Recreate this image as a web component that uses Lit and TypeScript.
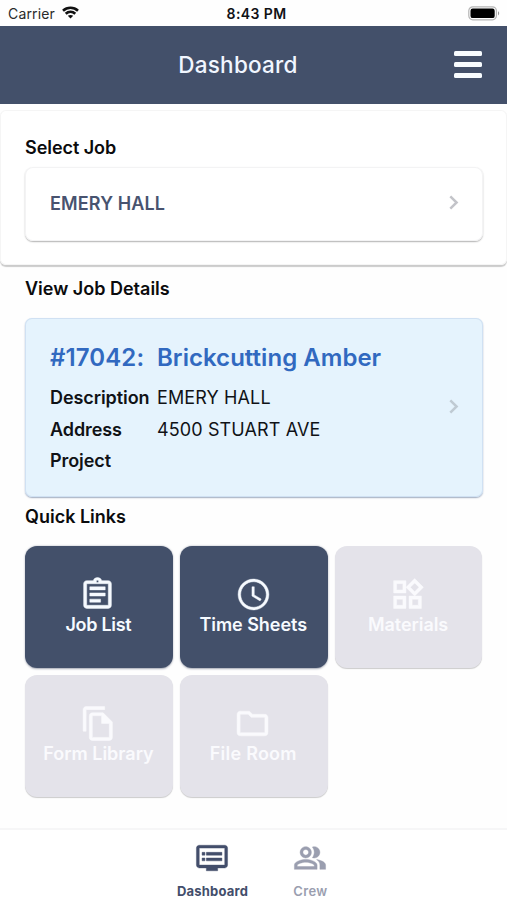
import { LitElement, html, css, svg } from "lit";
import { customElement, property } from "lit/decorators.js";
import { classMap } from "lit/directives/class-map.js";

const ICONS: Record<string, string> = {
  jobs: "M7 15h7v2H7zm0-4h10v2H7zm0-4h10v2H7zm12-4h-4.18C14.4 1.84 13.3 1 12 1s-2.4.84-2.82 2H5c-1.1 0-2 .9-2 2v14c0 1.1.9 2 2 2h14c1.1 0 2-.9 2-2V5c0-1.1-.9-2-2-2zm-7-.25c.41 0 .75.34.75.75s-.34.75-.75.75-.75-.34-.75-.75.34-.75.75-.75zM19 19H5V5h14v14z",
  clock: "M12 2C6.5 2 2 6.5 2 12s4.5 10 10 10 10-4.5 10-10S17.5 2 12 2zm0 18.3c-4.58 0-8.3-3.72-8.3-8.3S7.42 3.7 12 3.7s8.3 3.72 8.3 8.3-3.72 8.3-8.3 8.3zM12.5 7H11v6l5.25 3.15.75-1.23-4.5-2.67z",
  widgets: "M16.66 4.52l2.83 2.83-2.83 2.83-2.83-2.83 2.83-2.83M9 5v4H5V5h4m10 10v4h-4v-4h4M9 15v4H5v-4h4m7.66-13.31L11 7.34 16.66 13l5.66-5.66-5.66-5.65zM11 3H3v8h8V3zm10 10h-8v8h8v-8zm-10 0H3v8h8v-8z",
  copy: "M16 1H4c-1.1 0-2 .9-2 2v14h2V3h12V1zm-1 4H8c-1.1 0-1.99.9-1.99 2L6 21c0 1.1.89 2 1.99 2H19c1.1 0 2-.9 2-2V11l-6-6zM8 21V7h6v5h5v9H8z",
  folder: "M9.17 6l2 2H20v10H4V6h5.17M10 4H4c-1.1 0-1.99.9-1.99 2L2 18c0 1.1.9 2 2 2h16c1.1 0 2-.9 2-2V8c0-1.1-.9-2-2-2h-8l-2-2z",
  dashboard: "M21 3H3c-1.1 0-2 .9-2 2v12c0 1.1.9 2 2 2h5v2h8v-2h5c1.1 0 1.99-.9 1.99-2L23 5c0-1.1-.9-2-2-2zm0 14H3V5h18v12zm-2-9H8v2h11V8zm0 4H8v2h11v-2zM7 8H5v2h2V8zm0 4H5v2h2v-2z",
  crew: "M16.67 13.13C18.04 14.06 19 15.32 19 17v3h4v-3c0-2.18-3.57-3.47-6.33-3.87zM15 12c2.21 0 4-1.79 4-4s-1.79-4-4-4c-.47 0-.91.1-1.33.24C14.5 5.27 15 6.58 15 8s-.5 2.73-1.33 3.76c.42.14.86.24 1.33.24zM9 12c2.21 0 4-1.79 4-4s-1.79-4-4-4-4 1.79-4 4 1.79 4 4 4zm0-6c1.1 0 2 .9 2 2s-.9 2-2 2-2-.9-2-2 .9-2 2-2zM9 13c-2.67 0-8 1.34-8 4v3h16v-3c0-2.66-5.33-4-8-4zm6 5H3v-.99C3.2 16.29 6.3 15 9 15s5.8 1.29 6 2v1z",
};

const icon = (name: string, size: number) =>
  html`<svg class=${name} width=${size} height=${size} viewBox="0 0 24 24" fill="currentColor" stroke="currentColor" stroke-width="0.3">${svg`<path d=${ICONS[name]}></path>`}</svg>`;

const chevron = html`<svg class="chevron" width="10" height="15" viewBox="0 0 10 15" fill="none" stroke="currentColor" stroke-width="2.5"><path d="M1.3 1.3L7.6 7.5L1.3 13.7"></path></svg>`;

@customElement("quick-link")
export class QuickLink extends LitElement {
  @property() icon = "";
  @property() label = "";
  @property({ type: Boolean, reflect: true }) disabled = false;

  static styles = css`
    :host {
      display: flex;
      flex-direction: column;
      align-items: center;
      justify-content: center;
      box-sizing: border-box;
      height: 122px;
      border-radius: 12px;
      background: #43506a;
      color: #f6faff;
      box-shadow: 0 0.5px 2px rgba(30, 40, 70, 0.4);
    }
    :host([disabled]) {
      background: #e4e3ea;
      color: #fafafd;
      box-shadow: 0 1px 1px rgba(0, 0, 0, 0.2);
    }
    svg { display: block; margin-right: 3px; }
    .clock { margin-right: 0; }
    .widgets { margin-right: 2.5px; }
    .copy { margin-right: 0; }
    .label {
      font-size: 18px;
      line-height: 24px;
      font-weight: 600;
      white-space: nowrap;
      margin-right: 1px;
    }
    .tight { letter-spacing: -0.3px; }
    .snug { letter-spacing: -0.05px; }
    .wide { letter-spacing: 0.25px; }
  `;

  render() {
    const cls = {
      label: true,
      tight: this.icon === "jobs",
      snug: this.icon === "clock" || this.icon === "widgets",
      wide: this.icon === "folder",
    };
    return html`${icon(this.icon, 37)}<span class=${classMap(cls)}>${this.label}</span>`;
  }
}

@customElement("app-root")
export class AppRoot extends LitElement {
  static styles = css`
    :host {
      display: flex;
      flex-direction: column;
      box-sizing: border-box;
      height: 900px;
      overflow: hidden;
      background: #fefefe;
      color: #101216;
      font-family: Inter, "Open Sans", sans-serif;
      font-size: 18px;
      line-height: 24px;
    }
    svg { display: block; flex: none; }

    .status {
      display: grid;
      grid-template-columns: 1fr auto 1fr;
      align-items: center;
      flex: none;
      height: 25.5px;
      padding: 2px 7px 0 8px;
      box-sizing: border-box;
      font-size: 14px;
      line-height: 20px;
    }
    .carrier { display: flex; align-items: center; gap: 7px; letter-spacing: 0.15px; color: #2a2a2a; }
    .wifi { color: #111; margin-top: -2px; }
    .time { font-weight: 600; letter-spacing: 0.4px; margin-left: 5px; }
    .battery { justify-self: end; }

    .header {
      display: grid;
      grid-template-columns: 1fr auto 1fr;
      align-items: center;
      height: 78.5px;
      flex: none;
      padding-right: 25px;
      box-sizing: border-box;
      background: #43506a;
      color: #f1f6ff;
    }
    .title {
      grid-column: 2;
      font-size: 22.5px;
      line-height: 30px;
      font-weight: 500;
      letter-spacing: 0.22px;
      margin-left: -6px;
    }
    .menu { justify-self: end; display: flex; flex-direction: column; gap: 6.2px; width: 28px; }
    .bar { height: 5px; border-radius: 1.5px; background: #f8fcff; }

    .heading { font-weight: 600; letter-spacing: -0.05px; color: #0b0b0d; }
    .job {
      flex: none;
      box-sizing: border-box;
      height: 155px;
      margin-top: 6px;
      padding: 26px 24px 0 25px;
      border-radius: 6px;
      background: #fff;
      box-shadow: inset 0 0 0 1px #f5f5f5, 0 1.5px 1px rgba(0, 0, 0, 0.2);
    }
    .card { display: flex; align-items: center; justify-content: space-between; box-sizing: border-box; padding: 0 24px 0 25px; }
    .picker {
      height: 74px;
      margin-top: 7px;
      border-radius: 8px;
      background: #fff;
      box-shadow: inset 0 0 0 1px #f3f3f4, 0 1px 1.5px rgba(0, 0, 0, 0.3);
      color: #48536f;
      font-weight: 600;
      letter-spacing: 0.12px;
    }
    .chevron { color: #c3c4c9; margin-top: -3px; }

    .body { flex: 1; padding: 12px 24.5px 0 25px; }
    .body .heading { letter-spacing: 0; }
    .details {
      height: 179.5px;
      margin: 16.5px 0 7.5px;
      border-radius: 7px;
      background: #e5f3fd;
      box-shadow: inset 0 0 0 1px #d0e1f3, 0 1px 1.5px rgba(20, 50, 100, 0.4);
    }
    .details .chevron { color: #bfcad3; margin-top: -1px; }
    .info {
      display: grid;
      grid-template-columns: 107px auto;
      grid-template-rows: 32px 9px;
      grid-auto-rows: 31.5px;
      align-items: center;
      align-self: flex-start;
      padding-top: 24px;
    }
    .head { font-size: 24px; font-weight: 600; color: #3169c0; }
    .number { letter-spacing: 0.1px; }
    .name { letter-spacing: 0.03px; }
    .gap { grid-column: 1 / 3; }
    .term { font-weight: 600; letter-spacing: -0.08px; }
    .value { letter-spacing: 0.12px; white-space: nowrap; }
    .links { display: grid; grid-template-columns: repeat(3, 1fr); gap: 7px; margin-top: 17px; }

    .tabs {
      display: flex;
      flex: none;
      box-sizing: border-box;
      height: 72.5px;
      padding: 11px 0 0 163.5px;
      border-top: 2px solid #f6f6f7;
      background: #fff;
    }
    .tab {
      display: flex;
      flex-direction: column;
      align-items: center;
      gap: 7px;
      width: 98px;
      color: #9a9eaf;
      font-size: 13px;
      line-height: 18px;
      font-weight: 600;
      letter-spacing: 0.35px;
    }
    .tab svg { margin-right: 0.8px; }
    .active { color: #434e6b; font-weight: 700; letter-spacing: 0.2px; }
  `;

  render() {
    return html`
      <div class="status">
        <span class="carrier">Carrier
          <svg class="wifi" width="17" height="13" viewBox="0 0 17 13" fill="none" stroke="currentColor" stroke-width="2.6">
            <path d="M1 4.7C5.2.8 11.8.8 16 4.7M3.7 7.8C6.5 5.2 10.5 5.2 13.3 7.8"></path>
            <path d="M8.5 12.6L5.8 9.8C7.3 8.6 9.7 8.6 11.2 9.8z" fill="currentColor" stroke="none"></path>
          </svg>
        </span>
        <span class="time">8:43 PM</span>
        <svg class="battery" width="32" height="15" viewBox="0 0 32 15">
          <rect x=".8" y=".8" width="27.6" height="13" rx="4" fill="#fff" stroke="#b5b5b5" stroke-width="1.2"></rect>
          <rect x="2.5" y="2.5" width="24.2" height="9.6" rx="2.2" fill="#000"></rect>
          <path d="M30 5.2c1.6.6 1.6 3.6 0 4.2z" fill="#999"></path>
        </svg>
      </div>
      <div class="header">
        <span class="title">Dashboard</span>
        <span class="menu"><i class="bar"></i><i class="bar"></i><i class="bar"></i></span>
      </div>
      <div class="job">
        <div class="heading">Select Job</div>
        <div class="card picker"><span>EMERY HALL</span>${chevron}</div>
      </div>
      <div class="body">
        <div class="heading">View Job Details</div>
        <div class="card details">
          <div class="info">
            <span class="head number">#17042:</span><span class="head name">Brickcutting Amber</span>
            <span class="gap"></span>
            <span class="term">Description</span><span class="value">EMERY HALL</span>
            <span class="term">Address</span><span class="value">4500 STUART AVE</span>
            <span class="term">Project</span><span class="value"></span>
          </div>
          ${chevron}
        </div>
        <div class="heading">Quick Links</div>
        <div class="links">
          <quick-link icon="jobs" label="Job List"></quick-link>
          <quick-link icon="clock" label="Time Sheets"></quick-link>
          <quick-link icon="widgets" label="Materials" disabled></quick-link>
          <quick-link icon="copy" label="Form Library" disabled></quick-link>
          <quick-link icon="folder" label="File Room" disabled></quick-link>
        </div>
      </div>
      <div class="tabs">
        <div class="tab active">${icon("dashboard", 34)}Dashboard</div>
        <div class="tab">${icon("crew", 34)}Crew</div>
      </div>
    `;
  }
}
